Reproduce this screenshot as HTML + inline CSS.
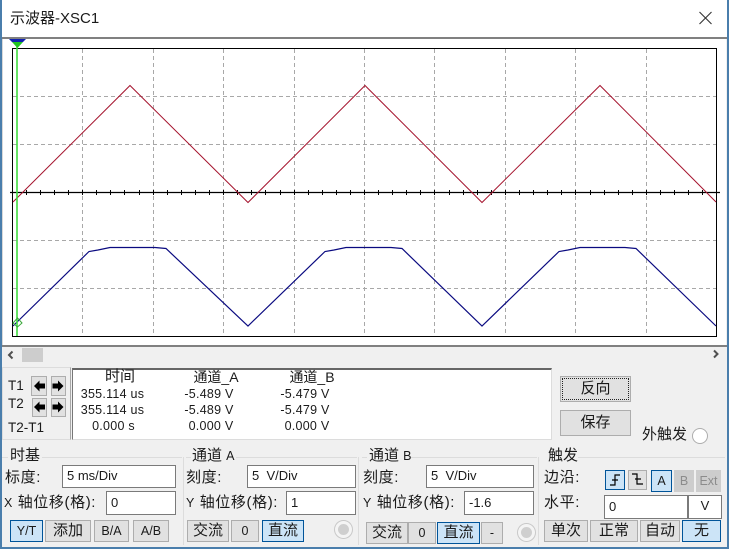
<!DOCTYPE html>
<html><head><meta charset="utf-8">
<style>
html,body{margin:0;padding:0;width:729px;height:549px;overflow:hidden;background:#f0f0f0}
body{position:relative;font-family:"Liberation Sans","Noto Sans CJK SC",sans-serif;color:#1a1a1a}
.a{position:absolute;box-sizing:border-box}
.t{position:absolute;white-space:nowrap;font-size:15px;line-height:18px;height:18px}
.c{text-align:center}
.m{font-size:12.5px;letter-spacing:.25px}
.b{position:absolute;box-sizing:border-box;background:#e1e1e1;border:1px solid #adadad;text-align:center;font-size:15px;line-height:20px;white-space:nowrap}
.s{font-size:12.5px}
.on{background:#cce4f7;border:1px solid #005499}
.i{position:absolute;box-sizing:border-box;background:#fff;border:1px solid #7a7a7a;font-size:13px;line-height:20px;padding-left:4px;white-space:pre}
.l{position:absolute;background:#dcdcdc}
.r{position:absolute;box-sizing:border-box;border-radius:50%;background:#fff;border:1px solid #adadad}
.w{letter-spacing:.6px}
</style></head>
<body>
<div class="a" style="left:0;top:0;width:729px;height:37px;background:#fff"></div>
<div class="t" style="left:10px;top:9px;font-size:15px;line-height:20px;height:20px">示波器-XSC1</div>
<svg class="a" style="left:698px;top:10px" width="16" height="16"><path d="M1.5 2 L13.5 14 M13.5 2 L1.5 14" stroke="#333" stroke-width="1.1" fill="none"/></svg>
<div class="a" style="left:0;top:37px;width:727px;height:2px;background:#808080"></div>

<svg class="a" style="left:2px;top:39px" width="724" height="306" viewBox="2 39 724 306">
<rect x="2" y="39" width="724" height="306" fill="#fff"/>
<rect x="2" y="39" width="1" height="306" fill="#d8d8d8"/>
<g stroke="#a8a8a8" stroke-width="1" stroke-dasharray="4 3" fill="none">
<path d="M82.5 49V336M153.5 49V336M223.5 49V336M294.5 49V336M364.5 49V336M434.5 49V336M505.5 49V336M575.5 49V336M646.5 49V336"/>
<path d="M13 96.5H716M13 144.5H716M13 240.5H716M13 288.5H716"/>
</g>
<rect x="12.5" y="48.5" width="704" height="288" fill="none" stroke="#000" stroke-width="1"/>
<path d="M10 192.5H720" stroke="#000" stroke-width="1.3"/>
<path d="M26.5 190V195M40.5 190V195M54.5 190V195M68.5 190V195M82.5 190V195M96.5 190V195M110.5 190V195M124.5 190V195M139.5 190V195M153.5 190V195M167.5 190V195M181.5 190V195M195.5 190V195M209.5 190V195M223.5 190V195M237.5 190V195M251.5 190V195M265.5 190V195M280.5 190V195M294.5 190V195M308.5 190V195M322.5 190V195M336.5 190V195M350.5 190V195M364.5 190V195M378.5 190V195M392.5 190V195M406.5 190V195M420.5 190V195M434.5 190V195M449.5 190V195M463.5 190V195M477.5 190V195M491.5 190V195M505.5 190V195M519.5 190V195M533.5 190V195M547.5 190V195M561.5 190V195M575.5 190V195M590.5 190V195M604.5 190V195M618.5 190V195M632.5 190V195M646.5 190V195M660.5 190V195M674.5 190V195M688.5 190V195M702.5 190V195" stroke="#000" stroke-width="1"/>
<path d="M13 202 L130 85.5 L248 202.5 L365 85.5 L482 202.5 L600 85.5 L716 202" fill="none" stroke="#a5142e" stroke-width="1"/>
<path d="M13 326 L89 251.5 L98 250 L110 247.5 L155 247.5 L166 248.5 L248 326 L325 251.5 L334 250 L346 247.5 L391 247.5 L402 248.5 L482 326 L559 251.5 L568 250 L580 247.5 L625 247.5 L636 248.5 L716 326" fill="none" stroke="#0a0a80" stroke-width="1.2"/>
<path d="M17 44V336" stroke="#3fdc3f" stroke-width="1.6"/>
<path d="M9 39H26L23 42H12Z" fill="#1020b0"/>
<path d="M12 42H23L17.5 48Z" fill="#22c422"/>
<path d="M17.5 318L22 323L17.5 327L13 323Z" fill="none" stroke="#3aa83a" stroke-width="1"/>
</svg>
<div class="a" style="left:2px;top:345px;width:725px;height:2px;background:#808080"></div>

<!-- scrollbar -->
<svg class="a" style="left:6px;top:350px" width="10" height="10"><path d="M6.5 1.5L3 5L6.5 8.5" fill="none" stroke="#505050" stroke-width="2"/></svg>
<svg class="a" style="left:711px;top:349px" width="10" height="10"><path d="M3 1.5L6.5 5L3 8.5" fill="none" stroke="#505050" stroke-width="2"/></svg>
<div class="a" style="left:22px;top:348px;width:21px;height:14px;background:#cdcdcd"></div>

<!-- cursor panel -->
<div class="a" style="left:2px;top:367px;width:69px;height:73px;border:1px solid #dcdcdc;border-right:1px solid #a8a8a8"></div>
<div class="t" style="left:8px;top:377px;font-size:13.5px">T1</div>
<div class="t" style="left:8px;top:395px;font-size:13.5px">T2</div>
<div class="t" style="left:8px;top:419px;font-size:13.5px">T2-T1</div>
<div class="b" style="left:31px;top:376px;width:16px;height:20px"></div>
<div class="b" style="left:51px;top:376px;width:15px;height:20px"></div>
<div class="b" style="left:32px;top:398px;width:15px;height:19px"></div>
<div class="b" style="left:51px;top:398px;width:15px;height:19px"></div>
<svg class="a" style="left:31px;top:376px" width="36" height="42">
<g fill="#000"><path d="M3 10L8.500 4.500V7.500H14V12.500H8.500V15.500Z"/><path d="M32.500 10L27 4.500V7.500H21.500V12.500H27V15.500Z"/><path d="M3 31L8.500 25.500V28.500H14V33.500H8.500V36.500Z"/><path d="M32.500 31L27 25.500V28.500H21.500V33.500H27V36.500Z"/></g></svg>

<div class="a" style="left:72px;top:368px;width:480px;height:72px;background:#fff;border-top:2px solid #666;border-left:1px solid #777;border-right:1px solid #dcdcdc;border-bottom:1px solid #dcdcdc"></div>
<div class="t c" style="left:90px;top:368px;width:60px">时间</div>
<div class="t c" style="left:186px;top:368px;width:60px;font-size:14px">通道_A</div>
<div class="t c" style="left:282px;top:368px;width:60px;font-size:14px">通道_B</div>
<div class="t m c" style="left:70px;top:385px;width:85px">355.114 us</div>
<div class="t m c" style="left:164px;top:385px;width:90px">-5.489 V</div>
<div class="t m c" style="left:260px;top:385px;width:90px">-5.479 V</div>
<div class="t m c" style="left:70px;top:401px;width:85px">355.114 us</div>
<div class="t m c" style="left:164px;top:401px;width:90px">-5.489 V</div>
<div class="t m c" style="left:260px;top:401px;width:90px">-5.479 V</div>
<div class="t m c" style="left:71px;top:417px;width:85px">0.000 s</div>
<div class="t m c" style="left:166px;top:417px;width:90px">0.000 V</div>
<div class="t m c" style="left:262px;top:417px;width:90px">0.000 V</div>

<div class="b" style="left:560px;top:376px;width:71px;height:26px;line-height:24px">反向</div>
<div class="a" style="left:562px;top:378px;width:67px;height:22px;border:1px dotted #222"></div>
<div class="b" style="left:560px;top:410px;width:71px;height:26px;line-height:23px">保存</div>
<div class="t" style="left:642px;top:426px">外触发</div>
<div class="r" style="left:692px;top:428px;width:16px;height:16px"></div>

<!-- group separators -->
<div class="l" style="left:2px;top:457px;width:6px;height:1px"></div>
<div class="l" style="left:42px;top:457px;width:140px;height:1px"></div>
<div class="l" style="left:186px;top:457px;width:5px;height:1px"></div>
<div class="l" style="left:236px;top:457px;width:121px;height:1px"></div>
<div class="l" style="left:362px;top:457px;width:5px;height:1px"></div>
<div class="l" style="left:411px;top:457px;width:126px;height:1px"></div>
<div class="l" style="left:578px;top:457px;width:147px;height:1px"></div>
<div class="l" style="left:183px;top:457px;width:1px;height:88px"></div>
<div class="l" style="left:358px;top:457px;width:1px;height:88px"></div>
<div class="l" style="left:538px;top:457px;width:1px;height:88px"></div>

<!-- timebase -->
<div class="t" style="left:10px;top:447px">时基</div>
<div class="t w" style="left:5px;top:469px">标度:</div>
<div class="i" style="left:62px;top:465px;width:114px;height:23px">5 ms/Div</div>
<div class="t w" style="left:4px;top:494px"><span class="s">X</span> 轴位移(格):</div>
<div class="i" style="left:106px;top:491px;width:70px;height:24px;line-height:21px">0</div>
<div class="b on s" style="left:10px;top:520px;width:33px;height:22px">Y/T</div>
<div class="b" style="left:45px;top:520px;width:46px;height:22px">添加</div>
<div class="b s" style="left:94px;top:520px;width:35px;height:22px">B/A</div>
<div class="b s" style="left:133px;top:520px;width:36px;height:22px">A/B</div>

<!-- channel A -->
<div class="t" style="left:192px;top:447px">通道 <span class="s">A</span></div>
<div class="t w" style="left:186px;top:469px">刻度:</div>
<div class="i" style="left:247px;top:465px;width:109px;height:23px">5  V/Div</div>
<div class="t w" style="left:186px;top:494px"><span class="s">Y</span> 轴位移(格):</div>
<div class="i" style="left:286px;top:491px;width:70px;height:24px;line-height:21px">1</div>
<div class="b" style="left:187px;top:520px;width:42px;height:22px">交流</div>
<div class="b s" style="left:231px;top:520px;width:28px;height:22px">0</div>
<div class="b on" style="left:262px;top:520px;width:42px;height:22px">直流</div>
<div class="r" style="left:335px;top:521px;width:17px;height:17px;background:#cfcfcf;border:3px solid #f4f4f4;box-shadow:0 0 0 1px #c8c8c8"></div>

<!-- channel B -->
<div class="t" style="left:369px;top:447px">通道 <span class="s">B</span></div>
<div class="t w" style="left:363px;top:469px">刻度:</div>
<div class="i" style="left:426px;top:465px;width:108px;height:23px">5  V/Div</div>
<div class="t w" style="left:363px;top:494px"><span class="s">Y</span> 轴位移(格):</div>
<div class="i" style="left:464px;top:491px;width:70px;height:24px;line-height:21px">-1.6</div>
<div class="b" style="left:366px;top:522px;width:42px;height:22px">交流</div>
<div class="b s" style="left:408px;top:522px;width:28px;height:22px">0</div>
<div class="b on" style="left:437px;top:522px;width:43px;height:22px">直流</div>
<div class="b s" style="left:481px;top:522px;width:22px;height:22px">-</div>
<div class="r" style="left:518px;top:524px;width:17px;height:17px;background:#cfcfcf;border:3px solid #f4f4f4;box-shadow:0 0 0 1px #c8c8c8"></div>

<!-- trigger -->
<div class="t" style="left:548px;top:447px">触发</div>
<div class="t w" style="left:544px;top:469px">边沿:</div>
<div class="b on" style="left:605px;top:470px;width:20px;height:20px"></div>
<div class="b" style="left:628px;top:470px;width:19px;height:20px"></div>
<svg class="a" style="left:605px;top:470px" width="44" height="20"><path d="M5 15H10V5H15M7 10H13" fill="none" stroke="#000" stroke-width="1.2"/><path d="M27 4H32V14H38M30 9H36" fill="none" stroke="#000" stroke-width="1.2"/></svg>
<div class="b on s" style="left:651px;top:470px;width:21px;height:22px">A</div>
<div class="b s" style="left:674px;top:470px;width:20px;height:22px;color:#8c8c8c;background:#cdcdcd;border-color:#cdcdcd">B</div>
<div class="b s" style="left:696px;top:470px;width:25px;height:22px;color:#8c8c8c;background:#cdcdcd;border-color:#cdcdcd">Ext</div>
<div class="t w" style="left:544px;top:494px">水平:</div>
<div class="i" style="left:604px;top:495px;width:85px;height:24px;line-height:22px;border-right:2px solid #7a7a7a">0</div>
<div class="i" style="left:688px;top:495px;width:34px;height:24px;padding-left:0;text-align:center;border-left:1px solid #7a7a7a">V</div>
<div class="b" style="left:544px;top:520px;width:44px;height:22px">单次</div>
<div class="b" style="left:590px;top:520px;width:48px;height:22px">正常</div>
<div class="b" style="left:640px;top:520px;width:40px;height:22px">自动</div>
<div class="b on" style="left:682px;top:520px;width:39px;height:22px">无</div>

<!-- window border -->
<div class="a" style="left:0;top:0;width:2px;height:549px;background:#4a7eac"></div>
<div class="a" style="left:727px;top:0;width:2px;height:549px;background:#4a7eac"></div>
<div class="a" style="left:0;top:547px;width:729px;height:2px;background:#4a7eac"></div>
</body></html>
